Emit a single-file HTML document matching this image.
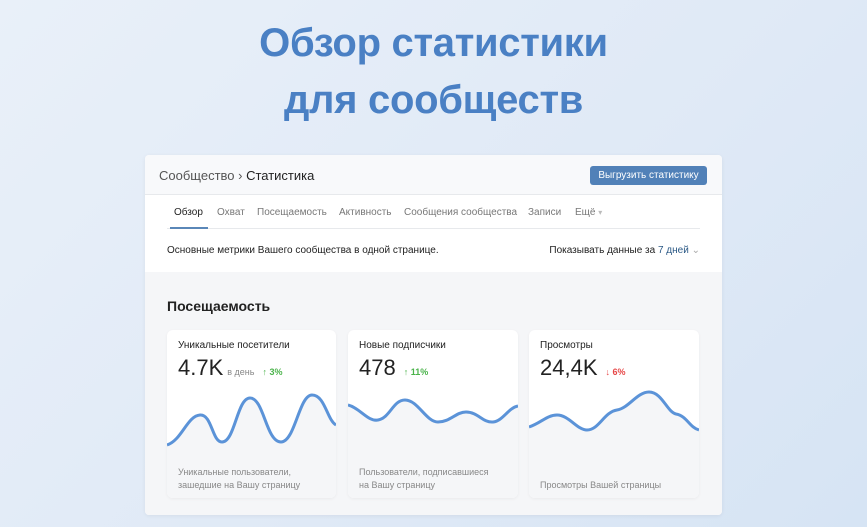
<!DOCTYPE html>
<html><head><meta charset="utf-8"><style>
*{margin:0;padding:0;box-sizing:border-box}
body{width:867px;height:527px;overflow:hidden;background:linear-gradient(135deg,#e9f0f9 0%,#dfe9f6 60%,#d6e4f4 100%);font-family:"Liberation Sans","DejaVu Sans",sans-serif;position:relative}
.t{position:absolute;left:0;width:867px;text-align:center;color:#4a80c4;font-weight:bold;font-size:40px;letter-spacing:-0.3px}
.panel{position:absolute;left:145px;top:155px;width:577px;height:360px;background:#fff;border-radius:4px;box-shadow:0 1px 4px rgba(0,0,0,.06);overflow:hidden}
.hd{height:40px;background:#f8f9fb;border-bottom:1px solid #e7e9ec;position:relative}
.bc{position:absolute;left:14px;top:13px;font-size:13px;color:#555}
.bc b{font-weight:normal;color:#222}
.btn{position:absolute;right:15px;top:11px;width:117px;height:19px;background:#5181b8;color:#fff;border-radius:3px;font-size:10px;text-align:center;line-height:20px}
.nav{position:absolute;top:52px;left:22px;right:22px;height:22px;border-bottom:1px solid #e7e9ec;font-size:10px;color:#777}
.nav span{position:absolute;top:0}
.nav .a{color:#222}
.ul{position:absolute;left:3px;top:20px;width:38px;height:2px;background:#5a87b8}
.ds{position:absolute;top:90px;font-size:10px;color:#222}
.low{position:absolute;top:117px;left:0;right:0;bottom:0;background:#f5f6f8}
.h2{position:absolute;left:22px;top:143px;font-size:14px;color:#222;font-weight:bold}
.card{position:absolute;top:175px;height:168px;background:#fff;border-radius:6px;overflow:hidden;box-shadow:0 1px 3px rgba(0,0,0,.05)}
.card svg{position:absolute;left:0;top:0}
.ct{position:absolute;left:11px;top:10px;font-size:10px;color:#222}
.cv{position:absolute;left:11px;top:25px;font-size:22px;color:#222}
.cv small{font-size:9px;color:#888;margin-left:4px}
.g{font-size:9px;color:#4bb34b;margin-left:8px;font-weight:bold}
.r{font-size:9px;color:#e64646;margin-left:8px;font-weight:bold}
.cf{position:absolute;left:11px;bottom:6px;font-size:9px;color:#888;line-height:13px}
</style></head><body>
<div class="t" style="top:21px">Обзор статистики</div>
<div class="t" style="top:78px">для сообществ</div>
<div class="panel">
 <div class="hd"><div class="bc">Сообщество › <b>Статистика</b></div><div class="btn">Выгрузить статистику</div></div>
 <div class="nav">
  <span class="a" style="left:7px">Обзор</span><span style="left:50px">Охват</span><span style="left:90px">Посещаемость</span><span style="left:172px">Активность</span><span style="left:237px">Сообщения сообщества</span><span style="left:361px">Записи</span><span style="left:408px">Ещё <span style="position:static;color:#bbb;font-size:8px">▾</span></span>
  <div class="ul"></div>
 </div>
 <div class="ds" style="left:22px">Основные метрики Вашего сообщества в одной странице.</div>
 <div class="ds" style="right:22px">Показывать данные за <span style="color:#2a5885">7 дней</span> <span style="color:#aaa">⌄</span></div>
 <div class="low"></div>
 <div class="h2">Посещаемость</div>
 <div class="card" style="left:22px;width:169px">
  <svg width="169" height="168"><path d="M0 115 C15 110 20 86 33 85 C45 84 45 112 55 112 C68 112 70 68 83 68 C97 68 99 112 114 112 C128 112 132 65 145 65 C158 65 160 90 169 95 L169 168 L0 168Z" fill="#f5f6f8"/><path d="M0 115 C15 110 20 86 33 85 C45 84 45 112 55 112 C68 112 70 68 83 68 C97 68 99 112 114 112 C128 112 132 65 145 65 C158 65 160 90 169 95" fill="none" stroke="#5b93d8" stroke-width="3"/></svg>
  <div class="ct">Уникальные посетители</div><div class="cv">4.7K<small>в день</small><span class="g">↑ 3%</span></div>
  <div class="cf">Уникальные пользователи,<br>зашедшие на Вашу страницу</div>
 </div>
 <div class="card" style="left:203px;width:170px">
  <svg width="170" height="168"><path d="M0 75 C12 78 20 92 30 90 C42 88 45 70 57 70 C70 70 78 92 90 92 C102 92 108 82 118 82 C130 82 135 93 145 92 C155 91 160 78 170 76 L170 168 L0 168Z" fill="#f5f6f8"/><path d="M0 75 C12 78 20 92 30 90 C42 88 45 70 57 70 C70 70 78 92 90 92 C102 92 108 82 118 82 C130 82 135 93 145 92 C155 91 160 78 170 76" fill="none" stroke="#5b93d8" stroke-width="3"/></svg>
  <div class="ct">Новые подписчики</div><div class="cv">478<span class="g">↑ 11%</span></div>
  <div class="cf">Пользователи, подписавшиеся<br>на Вашу страницу</div>
 </div>
 <div class="card" style="left:384px;width:170px">
  <svg width="170" height="168"><path d="M0 97 C12 93 18 85 28 85 C40 85 48 100 58 100 C70 100 75 82 88 80 C100 78 108 62 120 62 C133 62 138 82 147 84 C158 86 160 97 170 100 L170 168 L0 168Z" fill="#f5f6f8"/><path d="M0 97 C12 93 18 85 28 85 C40 85 48 100 58 100 C70 100 75 82 88 80 C100 78 108 62 120 62 C133 62 138 82 147 84 C158 86 160 97 170 100" fill="none" stroke="#5b93d8" stroke-width="3"/></svg>
  <div class="ct">Просмотры</div><div class="cv">24,4K<span class="r">↓ 6%</span></div>
  <div class="cf">Просмотры Вашей страницы</div>
 </div>
</div>
</body></html>
